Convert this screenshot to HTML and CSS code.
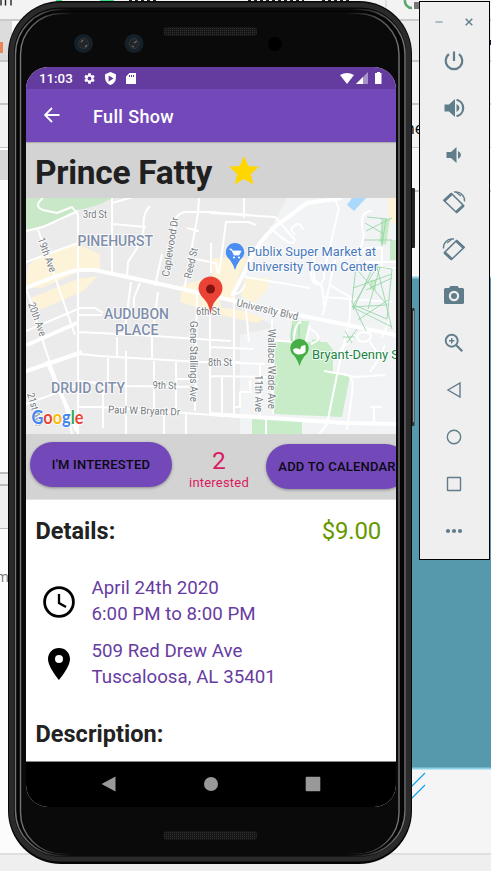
FILE: index.html
```html
<!DOCTYPE html>
<html lang="en">
<head>
<meta charset="utf-8">
<title>Full Show</title>
<link rel="stylesheet" href="styles.css">
</head>
<body>
<main class="desktop">
  <svg class="backdrop" viewBox="0 0 491 871" aria-hidden="true">
    <rect width="491" height="871" fill="#fcfcfc"/>
    <rect width="491" height="19" fill="#f3f3f3"/>
    <rect y="19" width="491" height="2" fill="#cbcbcb"/>
    <rect y="21" width="12" height="40" fill="#dcdcdc"/><rect x="400" y="21" width="91" height="40" fill="#ececec"/>
    <rect y="60" width="491" height="2" fill="#c7c7c7"/>
    <rect y="62" width="491" height="86" fill="#f2f2f2"/>
    <rect y="103" width="491" height="2" fill="#c7c7c7"/>
    <rect y="147" width="491" height="1" fill="#c7c7c7"/>
    <rect y="150" width="12" height="30" fill="#d6d6d6"/>
    <rect y="472" width="12" height="2" fill="#bdbdbd"/>
    <rect y="474" width="12" height="10" fill="#f0f0f0"/>
    <rect y="484" width="12" height="2" fill="#bdbdbd"/>
    <rect y="486" width="12" height="42" fill="#f0f0f0"/>
    <rect y="528" width="12" height="1" fill="#bdbdbd"/>
    <rect x="400" y="148" width="91" height="130" fill="#f7f7f7"/>
    <rect x="400" y="190" width="91" height="2" fill="#c7c7c7"/>
    <rect y="42" width="3" height="11" fill="#eb8659"/>
    <rect x="400" y="277" width="91" height="491" fill="#5799ac"/>
    <path d="M412 277.500H491M412 768.500H491" stroke="#8bd0e4" stroke-width="2"/>
    <rect x="400" y="770" width="91" height="84" fill="#f5f5f5"/>
    <rect y="853" width="491" height="2" fill="#dfdfdf"/><rect y="855" width="491" height="16" fill="#efefef"/>
    <path d="M411 787L425 773M411 799L425 785" stroke="#12a5ed" stroke-width="1.300"/>
    <path d="M405 0a7 7 0 0 0 7 8" fill="none" stroke="#59a869" stroke-width="2.500"/>
    <path d="M414 2h5v7h-5z" fill="#777"/><path d="M386 0V19" stroke="#ccc"/>
    <path d="M56 0h6M100 0h14" stroke="#3ddc84" stroke-width="3"/>
    <path d="M129 0h28M248 0h56M322 0h28" stroke="#222" stroke-width="3" stroke-dasharray="3 3"/>
    <path d="M1 0v5.500M5.500 0v5.500M11 0v5.500" stroke="#222" stroke-width="1.400"/>
    <text x="405" y="134" font-size="16">ne</text>
    <text x="-4" y="582" font-size="14" fill="#777">m</text>
    <rect x="490" y="40" width="1" height="5" fill="#124"/>
  </svg>

  <section class="phone">
    <svg class="shell" viewBox="8 1 408 864" aria-hidden="true">
      <defs>
        <linearGradient id="rail"><stop offset="0" stop-color="#757577"/><stop offset=".04" stop-color="#5c5c60"/><stop offset=".14" stop-color="#0c0c0c"/><stop offset=".86" stop-color="#0c0c0c"/><stop offset=".96" stop-color="#5c5c60"/><stop offset="1" stop-color="#757577"/></linearGradient>
        <pattern id="mesh" width="2" height="2" patternUnits="userSpaceOnUse"><rect width="2" height="2" fill="#161616"/><rect width="1" height="1" fill="#303030"/></pattern>
      </defs>
      <rect x="409" y="188" width="6" height="60" rx="1" fill="#222"/>
      <rect x="409" y="308" width="5.500" height="118" rx="1" fill="#333"/><path d="M413.500 311v111" stroke="#999"/>
      <rect x="8" y="1" width="404" height="863" rx="53" fill="#060606"/>
      <rect x="11.500" y="5" width="397" height="854" rx="49" fill="none" stroke="#2a2a2b" stroke-width="5"/>
      <rect x="15.500" y="9.500" width="389.500" height="846" rx="45" fill="#050505" stroke="url(#rail)" stroke-width="1.400"/>
      <rect x="20.500" y="13.500" width="378.500" height="840" rx="41" fill="#0a0a0a" stroke="url(#rail)" stroke-width="1.400"/>
      <rect x="23" y="14.500" width="374" height="839" rx="39" fill="#0a0a0a"/>
      <g fill="#152029"><circle cx="83.500" cy="43.500" r="9.500"/><circle cx="134" cy="43.500" r="9.500"/></g>
      <g fill="#232527" stroke="#30353a"><circle cx="83.500" cy="43.500" r="5"/><circle cx="134" cy="43.500" r="5"/></g>
      <path d="M81 42l2-2M85 47l2-2M134 43l3-2M132 46l2 1" stroke="#666d75" stroke-width="1.200"/>
      <circle cx="275" cy="44" r="7" fill="#000"/>
      <rect x="163.500" y="27" width="93.500" height="9" rx="4" fill="url(#mesh)"/>
      <rect x="163.500" y="831" width="93.500" height="9" rx="4" fill="url(#mesh)"/>
    </svg>

    <div class="screen">
      <div class="status">
        <span class="time">11:03</span>
        <svg class="st-icon gear" viewBox="0 0 24 24"><path d="M19.140 12.940c.04-.3.06-.61.06-.94 0-.32-.02-.64-.07-.94l2.030-1.580a.49.490 0 0 0 .12-.61l-1.920-3.320a.488.488 0 0 0-.59-.22l-2.390.96c-.5-.38-1.030-.7-1.620-.94l-.36-2.540a.484.484 0 0 0-.48-.41h-3.840c-.24 0-.43.17-.47.410l-.36 2.540c-.59.24-1.130.57-1.620.94l-2.390-.96c-.22-.08-.47 0-.59.220L2.740 8.870c-.12.210-.08.470.12.610l2.030 1.580c-.05.300-.09.630-.09.940s.02.640.07.940l-2.030 1.580a.49.490 0 0 0-.12.610l1.920 3.320c.12.220.37.290.59.220l2.390-.96c.5.380 1.030.700 1.620.940l.36 2.540c.05.240.24.410.48.410h3.840c.24 0 .44-.17.47-.41l.36-2.540c.59-.24 1.130-.56 1.620-.94l2.390.96c.22.080.47 0 .59-.22l1.920-3.320c.12-.22.070-.47-.12-.61zM12 15.600A3.600 3.600 0 1 1 12 8.400a3.600 3.600 0 0 1 0 7.200z"/></svg>
        <svg class="st-icon shield" viewBox="0 0 24 24"><path fill-rule="evenodd" d="M12 0L2 4v7c0 6 4 11 10 13 6-2 10-7 10-13V4zM8.500 6.500L17.500 12 8.500 17.500z"/></svg>
        <svg class="st-icon sd" viewBox="0 0 24 24"><path fill-rule="evenodd" d="M20 1H9L2 8v15h20V1zM8 5h2v4H8zM12 5h2v4h-2zM16 5h2v4h-2z"/></svg>
        <svg class="signals" viewBox="0 0 44 13"><path d="M0 3Q7-1 14 3L7 12z"/><path d="M28 0v12H16z" opacity=".45"/><path d="M23 5v7h-7z"/><path d="M37 0h3v1h1.500v11h-6.500V1H37z"/></svg>
      </div>

      <header class="appbar">
        <svg class="back" viewBox="0 0 16 16"><path d="M15.500 8H1.500M8 1L1 8l7 7"/></svg>
        <span>Full Show</span>
      </header>

      <div class="titlebar">
        <h1>Prince Fatty</h1>
        <svg class="star" viewBox="2 2 20 19"><path d="M12 17.270L18.180 21l-1.640-7.030L22 9.240l-7.190-.61L12 2 9.190 8.630 2 9.240l5.460 4.730L5.820 21z"/></svg>
      </div>

      <svg class="map" viewBox="26 198 370 236">
        <rect x="26" y="198" width="370" height="236" fill="#ebebeb"/>
        <path d="M326 198h70v236H240V335l36-8-36-20 5-35 22-37 20-37z" fill="#f1f3f5"/>
        <path d="M26 198H113Q91 209 76 210L60 221 26 230z" fill="#c8e8c8"/>
        <path fill="#fdf3d8" d="M28 266l10-9 38-13 8 3 16 7v15l-20 2-38 17-16-1zM28 299l50-20 20-3-15 15-43 19-10-12zM182 285l30-8 8 22 2 16-42-13zM213 258h35l-10 20-5 25-22-8zM245 277l25 1-3 12-13 13-13-7zM212 306l33 5 20 8-8 4-45-10zM388 198h8v26l-8-3z"/>
        <g fill="#c8ecc8"><path d="M275 342h52l6 8v24l17 1-8 42-68-3zM292 321h17l-6 30-13-5zM252 419h20v15h-20zM268 420h34v14h-34zM312 340q8-4 12 8v12h-14zM383 219l7-1-4 27-7-3zM390 240h6v20h-6zM370 280h6v10h-6z"/></g>
        <path d="M347 205l5-7h14l-12 13z" fill="#a9dafb"/>
        <g class="roads">
          <path d="M43 198q-10 8 0 12l14 3 15-6 6 8V434M26 231l17-4 35-16M112 198v77M112 203l28-8M113 224l33 3M150 206q-8 8-6 22l-3 14-13 20-1 15M26 262l52-19M38 230l17 47 20 58M26 288l5 14 15 49 22 63 4 20M26 345l52-22M26 372l54-18 20 2 100 6h40M26 404l52-19M78 332l60 3 62 4M78 315h24M26 331l54-23h15l8 5M131 282l-7 54M140 283l-6 15v20M155 286l7-32M172 250l3-28q0-7 9-10h26l40 3M199 198l-1 15-14 78M187 228l12 3M158 292l-4 31M195 259l21 4 2 10M211 243v30"/>
          <path d="M197 294l-2 117M210 296v118M152 336v24M117 337v21M126 351v83M108 358v26M154 361v53M176 362v51M176 379h22M103 386v42M78 381l50 5 70 1M78 407h22l99 7 60 4M164 412v22M186 413v21M234 297v119M246 310l3 32M198 339l33 2M210 347l44 2M213 362l52 2M210 376l58 1M222 376v37M260 365v50M272 319l1 95M250 380v10M252 392h-12v15h-5M266 416v18"/>
          <path d="M244 198v20M210 213l65 4 20 23q-2 10-25-13M256 225l-8-3h-22l-7 52M245 284q-4 10-10 10M295 235l-4-5q8-12 12 0M245 277l65 11M314 250v29l8 8 2 19M334 198l5 10-13 55M335 260l-12 55M311 272q0 12 7 12t6-12M330 285l20 12v20M324 297l68 5M340 260l27-12h15v20h14M372 211q-15 0-8 25l-7 25M396 262h-33M310 325l-5 20M272 340l22 2q0-18 7-20M309 328q18 10 2 16M324 371l18 3 13 3 30-2M350 317l-13 58-10 49-8 10M349 376q5 3 3 18l-5 36M358 340q-3-10 12-7 4 8-8 9zM370 342l10 15-10 15M380 357l5-12M370 407h12M374 408v18M340 350l16-15M390 318l-8 20"/>
        </g>
        <g class="main"><path d="M26 288q44-18 55-18h14l65 14 40 9 60 14 136 28M27 345l50-22M26 371l56-19M47 361l30 70M210 414l135 9 51 1M232 296l12-23q15-38 43-55l20-15 35-5"/></g>
        <g class="trails"><path d="M382 218v28M386 219l-4 26M367 217l20 2M365 223l19 11M366 231l26-13M364 240h28M356 264l36 5M355 267l32 38-35 2 25-40 15 62M356 267l-4 35 14 29M352 307l40 20M373 267l-20 43M380 267l-12 42M353 288l39-14M392 269l-5 50-33-14M366 290l26-12M358 320l30-20M345 331l7 12M343 337h12M347 343l10-14M293 325q-5 14 2 21M299 324v24"/></g>
        <g class="street">
          <text x="83" y="217.500" textLength="24" lengthAdjust="spacingAndGlyphs">3rd St</text>
          <text transform="translate(37.500 239) rotate(70)" textLength="36" lengthAdjust="spacingAndGlyphs">19th Ave</text>
          <text transform="translate(28 304) rotate(70)" textLength="35" lengthAdjust="spacingAndGlyphs">20th Ave</text>
          <text transform="translate(27 394) rotate(74)" textLength="34" lengthAdjust="spacingAndGlyphs">21st Ave</text>
          <text transform="translate(169 277) rotate(-81)" textLength="60" lengthAdjust="spacingAndGlyphs">Caplewood Dr</text>
          <text transform="translate(191 279) rotate(-77)" textLength="31" lengthAdjust="spacingAndGlyphs">Reed St</text>
          <text x="196" y="315" textLength="24" lengthAdjust="spacingAndGlyphs">6th St</text>
          <text transform="translate(236 306) rotate(13)" textLength="63" lengthAdjust="spacingAndGlyphs">University Blvd</text>
          <text transform="translate(190 321) rotate(90)" textLength="81" lengthAdjust="spacingAndGlyphs">Gene Stallings Ave</text>
          <text transform="translate(268 329) rotate(90)" textLength="80" lengthAdjust="spacingAndGlyphs">Wallace Wade Ave</text>
          <text transform="translate(254.500 375) rotate(90)" textLength="37" lengthAdjust="spacingAndGlyphs">11th Ave</text>
          <text x="208" y="365.500" textLength="24" lengthAdjust="spacingAndGlyphs">8th St</text>
          <text transform="translate(152.500 388.500) rotate(2)" textLength="24" lengthAdjust="spacingAndGlyphs">9th St</text>
          <text transform="translate(108 413) rotate(2)" textLength="72" lengthAdjust="spacingAndGlyphs">Paul W Bryant Dr</text>
        </g>
        <g class="area"><text x="77.500" y="246" textLength="75.500" lengthAdjust="spacingAndGlyphs">PINEHURST</text><text x="104" y="318.500" textLength="65" lengthAdjust="spacingAndGlyphs">AUDUBON</text><text x="115" y="335" textLength="43.500" lengthAdjust="spacingAndGlyphs">PLACE</text><text x="51" y="392.500" textLength="74" lengthAdjust="spacingAndGlyphs">DRUID CITY</text></g>
        <g class="shop"><text x="247" y="255.500" textLength="129" lengthAdjust="spacingAndGlyphs">Publix Super Market at</text><text x="247" y="270.500" textLength="131" lengthAdjust="spacingAndGlyphs">University Town Center</text></g>
        <text class="stadium" x="312" y="359" textLength="87" lengthAdjust="spacingAndGlyphs">Bryant-Denny S</text>
        <path d="M235 270q-2-6-5-10a9.200 9.200 0 1 1 10 0q-3 4-5 10z" fill="#4b8df1"/>
        <path d="M229.500 249h2l2.500 6h5l2-4h-8.500z" fill="#fff" stroke="#fff" stroke-width=".8"/><circle cx="234" cy="257.500" r="1.100" fill="#fff"/><circle cx="239" cy="257.500" r="1.100" fill="#fff"/>
        <path d="M299.500 366q-2-6-5-10a9.200 9.200 0 1 1 10 0q-3 4-5 10z" fill="#46ae46"/>
        <path d="M293 349.500q3-2.500 7 0l1.500-3.500 4-1v7q-3 3-8 2.500-4-1-4.500-5z" fill="#fff"/>
        <path d="M210.500 315q-1-10-6-15.500-6-6-6-11a12 12 0 0 1 24 0q0 5-6 11-5 5.500-6 15.500z" fill="#ea4335"/><circle cx="210.500" cy="289" r="4.500" fill="#811411"/>
        <text class="google" x="31.500" y="424" textLength="52" lengthAdjust="spacingAndGlyphs"><tspan fill="#4285f4">G</tspan><tspan fill="#ea4335">o</tspan><tspan fill="#fbbc05">o</tspan><tspan fill="#4285f4">g</tspan><tspan fill="#34a853">l</tspan><tspan fill="#ea4335">e</tspan></text>
      </svg>

      <div class="actions">
        <button class="pill interested">I'M INTERESTED</button>
        <div class="count"><strong>2</strong><span>interested</span></div>
        <button class="pill calendar">ADD TO CALENDAR</button>
      </div>

      <div class="content">
        <div class="heading-row"><h2>Details:</h2><span class="price">$9.00</span></div>
        <div class="info when">
          <svg viewBox="0 0 32 32"><circle cx="16" cy="16" r="14.400" fill="none" stroke="#000" stroke-width="2.800"/><path d="M16 8v9l7 4" fill="none" stroke="#000" stroke-width="2.300"/></svg>
          <p>April 24th 2020<br>6:00 PM to 8:00 PM</p>
        </div>
        <div class="info where">
          <svg viewBox="0 0 32 32"><path fill-rule="evenodd" d="M16 0C9.800 0 5 4.900 5 11c0 8 11 21 11 21s11-13 11-21C27 4.900 22.200 0 16 0zm0 15a4 4 0 1 1 0-8 4 4 0 0 1 0 8z"/></svg>
          <p>509 Red Drew Ave<br>Tuscaloosa, AL 35401</p>
        </div>
        <h2 class="desc">Description:</h2>
      </div>

      <nav class="navbar">
        <svg viewBox="0 0 16 16"><path d="M14.500 .5v15L.5 8z"/></svg>
        <svg viewBox="0 0 16 16"><circle cx="8" cy="8" r="7"/></svg>
        <svg viewBox="0 0 16 16"><rect x=".7" y=".7" width="14.600" height="14.600" rx="1"/></svg>
      </nav>
    </div>
  </section>

  <aside class="toolbar">
    <div class="window-buttons">
      <svg viewBox="0 0 10 10"><path d="M1.500 5h7" stroke="#9db0ba" stroke-width="1.600"/></svg>
      <svg viewBox="0 0 10 10"><path d="M1.700 1.700l6.600 6.600M8.300 1.700L1.700 8.300" stroke="#607d8b" stroke-width="1.400"/></svg>
    </div>
    <svg class="tool" viewBox="0 0 24 24"><path class="line" d="M12 2.500V12M7 5.200a8.300 8.300 0 1 0 10 0"/></svg>
    <svg class="tool" viewBox="0 0 24 24"><path d="M2.500 8.500H7L13 3v18l-6-5.500H2.500zM14.500 8q3 1.500 3 4t-3 4z"/><path class="line" d="M14.500 3.700a8.500 8.500 0 0 1 0 16.600"/></svg>
    <svg class="tool" viewBox="0 0 24 24"><path d="M4.500 9H9l5.500-5v16L9 15H4.500zM16 8q3 1.500 3 4t-3 4z"/></svg>
    <svg class="tool" viewBox="0 0 24 24"><path class="frame" d="M2 10.500L9.500 3.500 21.500 15.500 14.500 22.500z"/><path class="heavy" d="M2 11L9.500 4M14.500 22l7-6.500"/><path class="thin" d="M12 2q5-1 8 2.500 3 3 2.500 7M14 2l5 4"/></svg>
    <svg class="tool" viewBox="0 0 24 24"><path class="frame" d="M22 10.500L14.500 3.500 2.500 15.500 9.500 22.500z"/><path class="heavy" d="M22 11L14.500 4M9.500 22l-7-6.500"/><path class="thin" d="M12 2q-5-1-8 2.500-3 3-2.500 7M10 2L5 6"/></svg>
    <svg class="tool" viewBox="0 0 24 24"><path fill-rule="evenodd" d="M8.500 2L7 4H3.500Q2 4 2 5.500v13Q2 20 3.500 20h17q1.500 0 1.500-1.500v-13Q22 4 20.500 4H17l-1.500-2zM12 17.200a5.200 5.200 0 1 1 0-10.400 5.200 5.200 0 0 1 0 10.400z"/><circle cx="12" cy="12" r="3"/></svg>
    <svg class="tool" viewBox="0 0 24 24"><circle class="lens" cx="9.700" cy="9.700" r="6"/><path class="line" d="M14 14l6.300 6.300"/><path class="fine" d="M9.700 7v5.400M7 9.700h5.400"/></svg>
    <svg class="tool" viewBox="0 0 24 24"><path class="fine" d="M18 5v14L6 12z"/></svg>
    <svg class="tool" viewBox="0 0 24 24"><circle class="fine" cx="12" cy="12" r="6.700"/></svg>
    <svg class="tool" viewBox="0 0 24 24"><rect class="fine" x="5.500" y="5.500" width="13" height="13" rx=".5"/></svg>
    <svg class="tool" viewBox="0 0 24 24"><circle cx="6" cy="12" r="2.100"/><circle cx="12" cy="12" r="2.100"/><circle cx="18" cy="12" r="2.100"/></svg>
  </aside>
</main>
</body>
</html>
```
FILE: styles.css
```css
* { box-sizing: border-box; }
html, body { margin: 0; }
body { font-family: Roboto, "Liberation Sans", sans-serif; overflow: hidden; }
h1, h2, p { margin: 0; }
svg { display: block; flex: none; }

.desktop { position: relative; width: 491px; height: 871px; overflow: hidden; }
.backdrop { width: 491px; height: 871px; font-family: "Open Sans", sans-serif; }

/* Emulated device window */
.phone { position: absolute; left: 8px; top: 1px; width: 408px; height: 864px; padding: 66px 20px 58px 18px; }
.shell { position: absolute; left: 0; top: 0; width: 408px; height: 864px; }
.screen {
  position: relative; width: 370px; height: 740px; overflow: hidden;
  border-radius: 22px; background: #fff; display: flex; flex-direction: column;
}

.status {
  height: 22px; flex: none; display: flex; align-items: center;
  padding: 0 12px 0 13px; background: #643b9f; color: #fff; fill: #fff;
}
.time { width: 44px; font-size: 13.300px; font-weight: 500; padding-top: 1px; }
.st-icon { width: 13px; height: 13px; }
.shield, .sd { margin-left: 8px; }
.sd { width: 12px; height: 13px; }
.signals { width: 44px; height: 13px; margin-left: auto; }

.appbar {
  height: 53px; flex: none; display: flex; align-items: center; gap: 33px;
  padding: 0 18px 1px; background: #7349b9; color: #fff;
  font-size: 18px; font-weight: 500;
}
.appbar span { padding-top: 3px; letter-spacing: .35px; }
.back { width: 16px; height: 16px; fill: none; stroke: #fff; stroke-width: 1.800; }

.titlebar {
  height: 56px; flex: none; display: flex; align-items: center; gap: 17px;
  padding: 2px 10px 0 9px; background: #d3d3d3; box-shadow: inset 0 2px 1px -1px #aaa;
}
.titlebar h1 { padding-top: 3px; font-size: 33.500px; line-height: 40px; font-weight: 700; letter-spacing: -.3px; color: #202020; width: 177px; white-space: nowrap; }
.star { width: 30px; height: 28.500px; margin-top: -2px; fill: #ffd600; }

.map { width: 370px; height: 236px; }
.roads { fill: none; stroke: #fff; stroke-width: 2; stroke-linejoin: round; }
.main { fill: none; stroke: #fff; stroke-width: 4; }
.trails { fill: none; stroke: #8fd3a2; stroke-width: .8; }
.map text { paint-order: stroke; stroke: rgba(255,255,255,.8); stroke-width: 2px; stroke-linejoin: round; }
.map .street { font-size: 10.500px; fill: #747a80; }
.area { font-size: 14.500px; font-weight: 500; fill: #7f8fab; }
.shop { font-size: 13.500px; fill: #4a78bd; }
.stadium { font-size: 13.500px; fill: #208545; }
.map .google { font-size: 18.500px; font-family: Lato, sans-serif; font-weight: 700; }

.actions {
  height: 66px; flex: none; display: flex; align-items: flex-start;
  background: #d3d3d3; padding: 8px 0 0 4px; border-bottom: 1px solid #e2e2e2;
}
.pill {
  flex: none; border: 0; border-radius: 23px; height: 45px; padding: 0;
  background: #7349b9; color: #0a0812; font: 500 13px/46px Roboto, sans-serif;
  letter-spacing: .2px; white-space: nowrap; box-shadow: 0 1px 3px rgba(0,0,0,.35);
}
.interested { width: 142px; }
.calendar { width: 142px; margin-top: 2px; }
.count { width: 94px; flex: none; display: flex; flex-direction: column; align-items: center; padding-top: 5px; color: #d81b60; }
.count strong { font-size: 24.500px; line-height: 28px; font-weight: 400; }
.count span { font-size: 13px; line-height: 16px; letter-spacing: .2px; }

.content { flex: 1; padding: 15px 15px 0 9.500px; }
.content h2 { font-size: 23.500px; line-height: 33px; font-weight: 700; letter-spacing: .03px; color: #222; }
.heading-row { display: flex; height: 34px; justify-content: space-between; }
.price { font-size: 24px; line-height: 33px; color: #669900; letter-spacing: -.2px; }
.info { display: flex; align-items: center; gap: 17px; padding-left: 7px; }
.info svg { width: 32px; height: 32px; }
.info p { font-size: 18.700px; line-height: 25.500px; color: #673ca1; white-space: nowrap; letter-spacing: .04px; }
.when { margin-top: 27px; }
.where { margin-top: 12px; }
.where svg { margin-top: -2px; }
.desc { margin-top: 28px; }

.navbar {
  height: 46px; flex: none; border-top: 1px solid #888; background: #000;
  display: flex; align-items: center; justify-content: center; gap: 86px;
  padding: 0 1px 2px 0; fill: #999;
}
.navbar svg { width: 16px; height: 16px; }

/* Emulator control strip */
.toolbar {
  position: absolute; left: 419px; top: 1px; width: 71px; height: 559px;
  border: 1px solid #000; background: #efefef; fill: #607d8b;
  display: flex; flex-direction: column; align-items: center; gap: 23px;
  padding-right: 1px;
}
.window-buttons { display: flex; gap: 20px; width: 100%; padding: 15px 0 0 14px; height: 24px; }
.window-buttons svg { width: 10px; height: 10px; }
.tool { width: 24px; height: 24px; }
.line, .heavy, .thin, .fine, .frame, .lens { fill: none; stroke: #607d8b; }
.line { stroke-width: 2.200; }
.frame { stroke-width: 1.600; }
.heavy { stroke-width: 3; }
.thin { stroke-width: 1.300; }
.lens { stroke-width: 1.900; }
.fine { stroke-width: 1.400; }
```
